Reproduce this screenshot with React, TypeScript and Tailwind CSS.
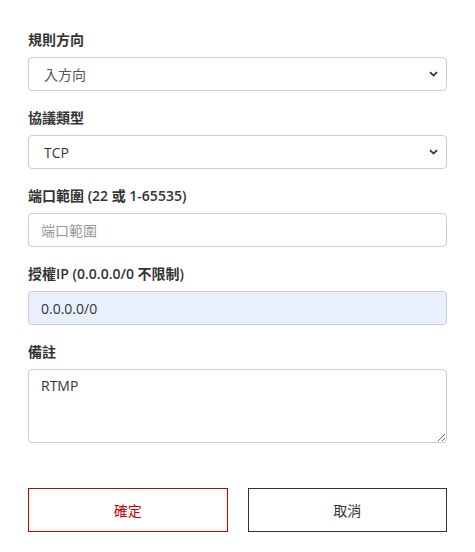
import React from "react";

const font = { fontFamily: '"Open Sans", "Noto Sans CJK TC", sans-serif' };

const Chevron = () => (
  <svg
    className="pointer-events-none absolute right-[9px] top-1/2 -translate-y-1/2"
    width="9"
    height="6"
    viewBox="0 0 9 6"
  >
    <path d="M1 1.2 L4.5 4.6 L8 1.2" fill="none" stroke="#333" strokeWidth="1.8" />
  </svg>
);

const App: React.FC = () => {
  const label = "block h-5 mb-[7px] text-[14px] leading-5 font-semibold text-[#333]";
  const box =
    "block w-full h-[34px] rounded-[4px] border border-[#ccc] text-[14px] text-[#333] outline-none";

  return (
    <div
      className="w-[475px] h-[552px] bg-white pt-[30px] px-[28px]"
      style={font}
    >
      <div className="mb-[17px]">
        <label className={label}>規則方向</label>
        <div className="relative">
          <select className={`${box} bg-white appearance-none pl-[15px] text-[#555]`} defaultValue="in">
            <option value="in">入方向</option>
            <option value="out">出方向</option>
          </select>
          <Chevron />
        </div>
      </div>

      <div className="mb-[17px]">
        <label className={label}>協議類型</label>
        <div className="relative">
          <select className={`${box} bg-white appearance-none pl-[15px]`} defaultValue="tcp">
            <option value="tcp">TCP</option>
            <option value="udp">UDP</option>
          </select>
          <Chevron />
        </div>
      </div>

      <div className="mb-[17px]">
        <label className={label}>端口範圍 (22 或 1-65535)</label>
        <input
          className={`${box} bg-white px-[12px] placeholder:text-[#999]`}
          placeholder="端口範圍"
        />
      </div>

      <div className="mb-[17px]">
        <label className={label}>授權IP (0.0.0.0/0 不限制)</label>
        <input
          className={`${box} bg-[#e8f0fe] px-[12px]`}
          defaultValue="0.0.0.0/0"
        />
      </div>

      <div>
        <label className={label}>備註</label>
        <textarea
          className="block w-full h-[74px] rounded-[4px] border border-[#ccc] bg-white px-[12px] py-[6px] text-[14px] leading-5 text-[#333] outline-none"
          defaultValue="RTMP"
        />
      </div>

      <div className="mt-[45px] grid grid-cols-2 gap-[20px]">
        <button className="h-[44px] border border-[#cc0000] bg-white text-[14px] text-[#cc0000]">
          確定
        </button>
        <button className="h-[44px] border border-[#333] bg-white text-[14px] text-[#333]">
          取消
        </button>
      </div>
    </div>
  );
};

export default App;
